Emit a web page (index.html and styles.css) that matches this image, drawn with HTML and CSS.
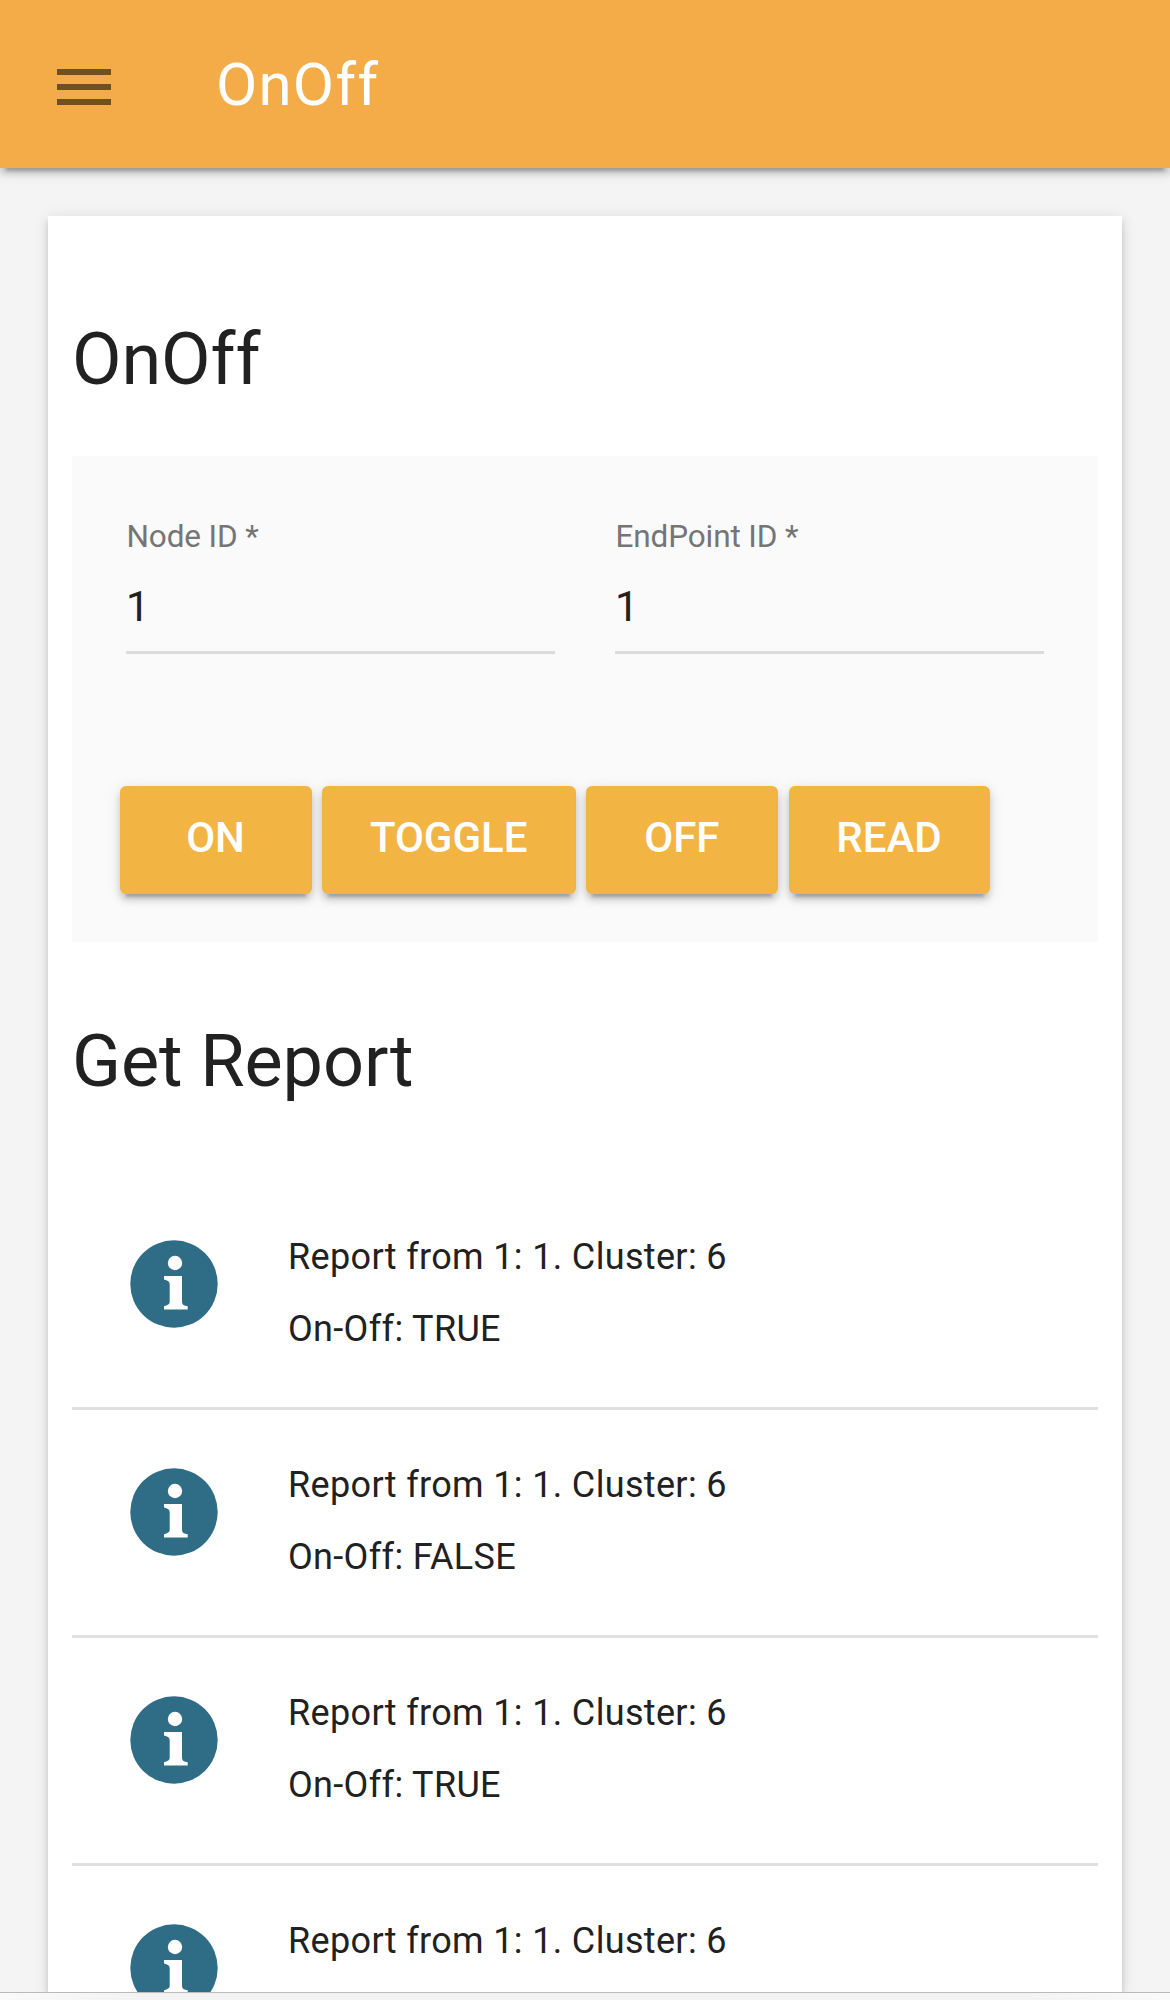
FILE: index.html
```
<!DOCTYPE html>
<html lang="en">
<head>
<meta charset="utf-8">
<title>OnOff</title>
<link rel="stylesheet" href="styles.css">
</head>
<body>
<svg class="defs" aria-hidden="true">
  <symbol id="info" viewBox="0 0 88 88">
    <circle cx="44" cy="44" r="43.7" fill="#2f6d87"/>
    <circle cx="45" cy="23" r="7.2" fill="#fff"/>
    <path d="M34 36H52V62Q52 65.700 57.700 66.300V69.500H34V66.300Q39.700 65 39.700 62V44Q39.700 40.500 34 39.500Z" fill="#fff"/>
  </symbol>
</svg>
<div class="app">
  <header class="toolbar">
    <button class="menu" aria-label="Menu"><span></span><span></span><span></span></button>
    <div class="toolbar-title">OnOff</div>
  </header>
  <main class="card">
    <h1 class="heading">OnOff</h1>
    <form class="panel">
      <div class="fields">
        <label class="field"><span class="label">Node ID *</span><span class="value">1</span></label>
        <label class="field"><span class="label">EndPoint ID *</span><span class="value">1</span></label>
      </div>
      <div class="actions">
        <button type="button" class="btn">ON</button>
        <button type="button" class="btn">TOGGLE</button>
        <button type="button" class="btn">OFF</button>
        <button type="button" class="btn">READ</button>
      </div>
    </form>
    <h1 class="heading report-heading">Get Report</h1>
    <ul class="reports">
      <li class="report"><svg class="icon"><use href="#info"/></svg><div><p>Report from 1: 1. Cluster: 6</p><p>On-Off: TRUE</p></div></li>
      <li class="report"><svg class="icon"><use href="#info"/></svg><div><p>Report from 1: 1. Cluster: 6</p><p>On-Off: FALSE</p></div></li>
      <li class="report"><svg class="icon"><use href="#info"/></svg><div><p>Report from 1: 1. Cluster: 6</p><p>On-Off: TRUE</p></div></li>
      <li class="report"><svg class="icon"><use href="#info"/></svg><div><p>Report from 1: 1. Cluster: 6</p></div></li>
    </ul>
  </main>
  <div class="bottom-bar"></div>
</div>
</body>
</html>
```
FILE: styles.css
```
* {
  box-sizing: border-box;
}

body {
  margin: 0;
  background: #f4f4f4;
  color: #212121;
  font-family: Roboto, sans-serif;
}

.defs {
  display: none;
}

.app {
  display: flex;
  flex-direction: column;
  height: 2000px;
  overflow: hidden;
}

.toolbar,
.card,
.btn {
  box-shadow: 0 9px 3px -6px rgba(0, 0, 0, .2), 0 6px 6px rgba(0, 0, 0, .14), 0 3px 15px rgba(0, 0, 0, .12);
}

.toolbar {
  display: flex;
  flex: none;
  align-items: flex-start;
  gap: 105px;
  height: 168px;
  padding-left: 57px;
  background: #f4ac48;
}

.menu {
  display: flex;
  flex-direction: column;
  gap: 9px;
  width: 54px;
  margin: 69px 0 0;
  padding: 0;
  border: 0;
  background: none;
}

.menu span {
  width: 54px;
  height: 6px;
  background: rgba(0, 0, 0, .54);
}

.toolbar-title {
  margin-top: 49px;
  color: #fff;
  font-size: 60px;
  line-height: 72px;
  letter-spacing: 1.2px;
}

.card {
  flex: none;
  height: 1776px;
  margin: 48px 48px 0;
  padding: 102px 24px 0;
  overflow: hidden;
  background: #fff;
}

.heading {
  margin: 0;
  font-size: 72px;
  font-weight: 400;
  line-height: 84px;
  letter-spacing: -.1px;
}

.panel {
  height: 486px;
  margin-top: 54px;
  padding: 63px 54px 0;
  background: #fafafa;
}

.fields {
  display: grid;
  grid-template-columns: 429px 429px;
  gap: 60px;
}

.field {
  display: flex;
  flex-direction: column;
  height: 135px;
  border-bottom: 3px solid #dbdbdb;
}

.label {
  padding-left: .5px;
  color: #757575;
  font-size: 31.5px;
  line-height: 36px;
  letter-spacing: -.12px;
}

.value {
  margin-top: 28px;
  font-size: 42px;
  line-height: 48px;
}

.actions {
  display: flex;
  gap: 10.4px;
  margin: 132px 0 0 -6px;
}

.btn {
  min-width: 192px;
  height: 108px;
  padding: 0 48.5px 4px 47.5px;
  border: 0;
  border-radius: 6px;
  background: #f2b544;
  color: #fff;
  font: 500 42px/104px Roboto, sans-serif;
}

.report-heading {
  margin-top: 78px;
}

.reports {
  margin: 78px 0 0;
  padding: 0;
  list-style: none;
}

.report {
  display: flex;
  gap: 70px;
  height: 228px;
  padding: 39px 0 0 58px;
  border-bottom: 3px solid #e0e0e0;
  font-size: 36px;
  line-height: 72px;
  letter-spacing: .34px;
}

.report p {
  margin: 0;
}

.icon {
  flex: none;
  width: 88px;
  height: 88px;
  margin-top: 19px;
}

.bottom-bar {
  z-index: 1;
  flex: none;
  height: 8px;
  border-top: 1px solid #bababa;
  background: linear-gradient(90deg, #fafafa, #f3f3f3 12%, #f3f3f3 88%, #fafafa);
  box-shadow: 0 0 45px -4px rgba(0, 0, 0, .07);
}
```
